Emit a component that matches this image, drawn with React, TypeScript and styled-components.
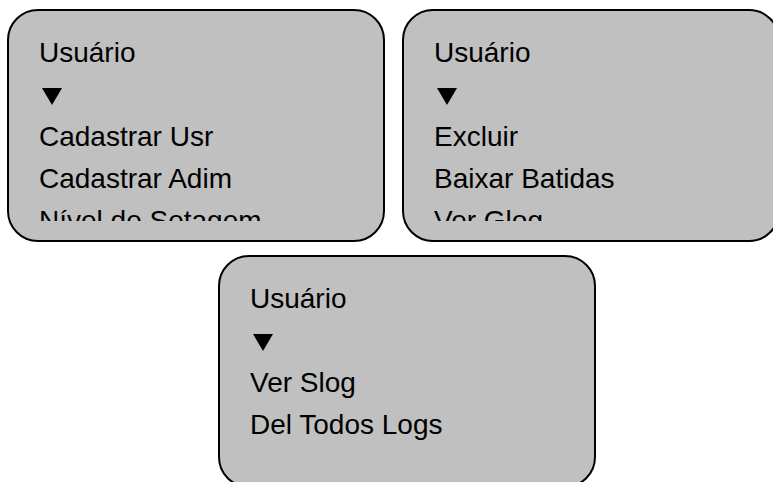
import styled, { createGlobalStyle } from 'styled-components';

const GlobalStyle = createGlobalStyle`
  html, body {
    margin: 0;
    padding: 0;
    overflow: hidden;
    background: #ffffff;
  }
  body {
    font-family: 'Liberation Sans', Arial, sans-serif;
  }
`;

const Page = styled.div`
  display: flex;
  flex-direction: column;
  gap: 13px;
  padding: 9px 0 0 7px;
  width: 900px;
`;

const Row = styled.div<{ $indent?: number }>`
  display: flex;
  gap: 17px;
  padding-left: ${({ $indent }) => $indent ?? 0}px;
`;

const Panel = styled.div`
  box-sizing: border-box;
  flex: 0 0 auto;
  width: 378px;
  height: 233px;
  padding: 21px 0 0 30px;
  background: #c0c0c0;
  border: 2px solid #000;
  border-radius: 31px;
`;

const Lines = styled.ul`
  margin: 0;
  padding: 0;
  list-style: none;
  height: 189px;
  overflow: hidden;
  font-size: 28px;
  line-height: 42px;
  color: #000;
`;

const Line = styled.li`
  white-space: nowrap;
`;

const Arrow = styled.li`
  height: 42px;
  display: flex;
  align-items: center;
  padding-left: 3px;

  &::before {
    content: '';
    display: block;
    width: 0;
    height: 0;
    border-left: 10px solid transparent;
    border-right: 10px solid transparent;
    border-top: 17px solid #000;
    margin-top: 2px;
  }
`;

type MenuProps = {
  title: string;
  items: string[];
};

const Menu = ({ title, items }: MenuProps) => (
  <Panel>
    <Lines>
      <Line>{title}</Line>
      <Arrow />
      {items.map(item => (
        <Line key={item}>{item}</Line>
      ))}
    </Lines>
  </Panel>
);

const App = () => (
  <>
    <GlobalStyle />
    <Page>
      <Row>
        <Menu title="Usuário" items={['Cadastrar Usr', 'Cadastrar Adim', 'Nível de Setagem']} />
        <Menu title="Usuário" items={['Excluir', 'Baixar Batidas', 'Ver Glog']} />
      </Row>
      <Row $indent={211}>
        <Menu title="Usuário" items={['Ver Slog', 'Del Todos Logs']} />
      </Row>
    </Page>
  </>
);

export default App;
